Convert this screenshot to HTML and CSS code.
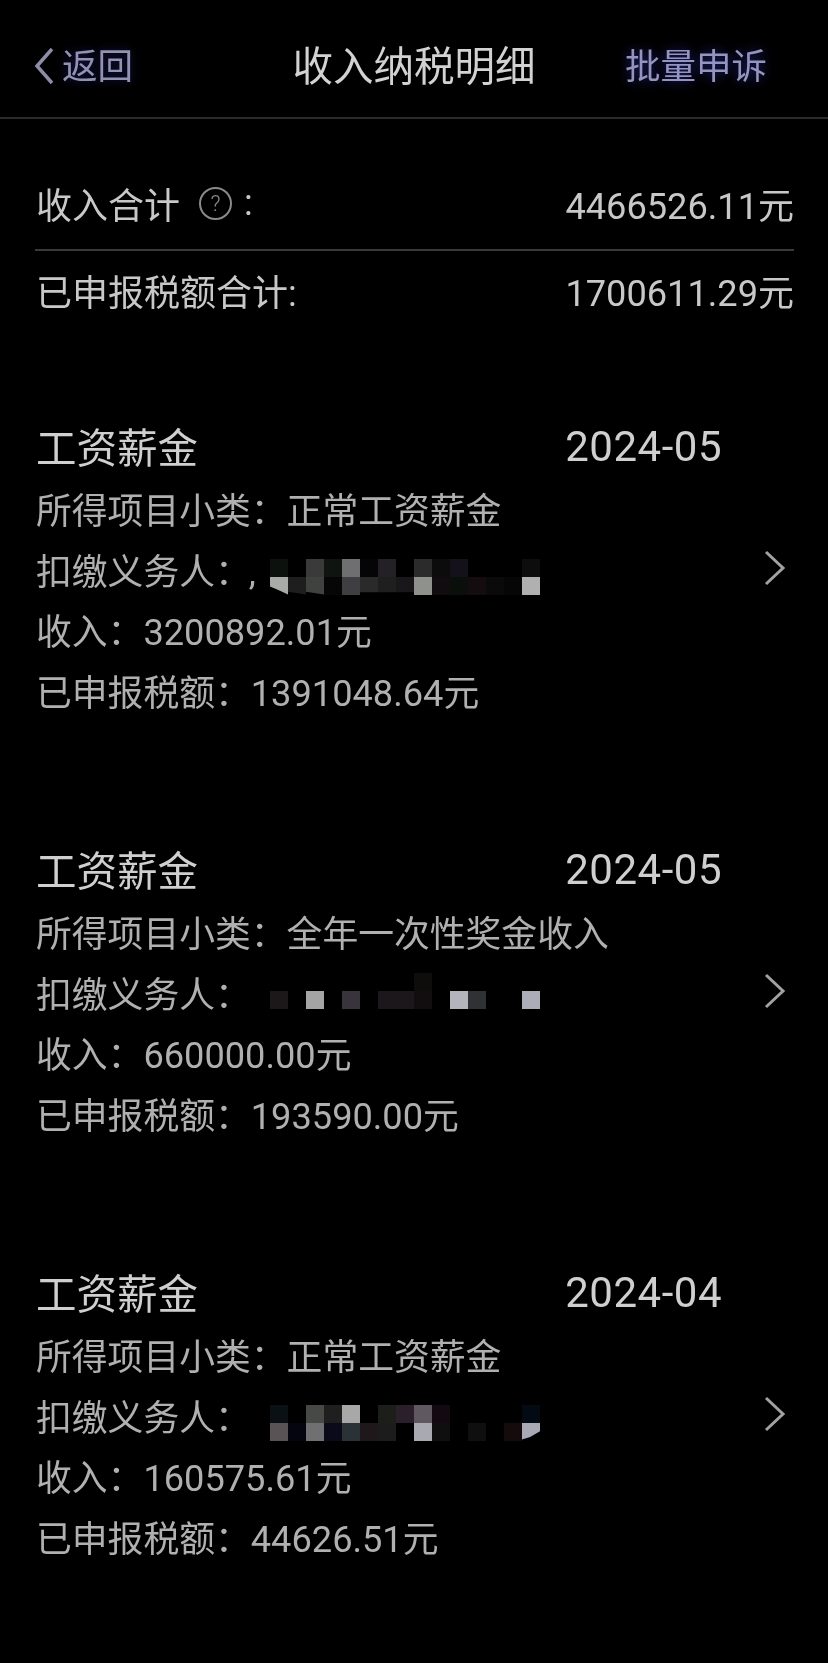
FILE: index.html
```html
<!DOCTYPE html>
<html lang="zh-CN">
<head>
<meta charset="utf-8">
<title>收入纳税明细</title>
<link rel="stylesheet" href="styles.css">
</head>
<body>
<div class="page">
  <header class="nav">
    <div class="back">
      <svg class="back-icon" viewBox="0 0 20 38"><path d="M18 2 3 19l15 17"/></svg>
      <span>返回</span>
    </div>
    <h1 class="nav-title">收入纳税明细</h1>
    <div class="appeal">批量申诉</div>
  </header>

  <section class="summary">
    <div class="sum-row sum-first">
      <div class="sum-label">收入合计<span class="help">?</span><span class="help-colon">:</span></div>
      <div><span class="num">4466526.11</span>元</div>
    </div>
    <div class="sum-row sum-second">
      <div>已申报税额合计:</div>
      <div><span class="num">1700611.29</span>元</div>
    </div>
  </section>

  <section class="item">
    <div class="item-head"><span>工资薪金</span><span class="item-date">2024-05</span></div>
    <div class="line">所得项目小类：正常工资薪金</div>
    <div class="line line-payer">
      <span>扣缴义务人：<span class="comma">,</span></span>
      <svg class="chev" viewBox="0 0 22 36"><path d="M2 2l17 16L2 34"/></svg>
      <div class="mosaic mosaic-a">
        <i style="background:#0d110d"></i><i></i><i style="background:#3a3a3a"></i><i style="background:#101410"></i><i style="background:#6f6e70"></i><i style="background:#050508"></i><i style="background:#232126"></i><i></i><i style="background:#2b2b2b"></i><i style="background:#0c0c0c"></i><i style="background:#15111a"></i><i></i><i></i><i></i><i style="background:#0d0d0d"></i>
        <i class="cut-l" style="background:#a8aca8"></i><i class="cut-m" style="background:#1e1e1e"></i><i class="cut-m" style="background:#3f423f"></i><i style="background:#060606"></i><i style="background:#3f3f42"></i><i class="cut-s" style="background:#2a2a2a"></i><i class="cut-s" style="background:#201f20"></i><i class="cut-s" style="background:#1a171b"></i><i style="background:#8f918d"></i><i style="background:#100c10"></i><i style="background:#0a0f0b"></i><i style="background:#140c0e"></i><i style="background:#0a0a0a"></i><i style="background:#060606"></i><i style="background:#b0b0b0"></i>
      </div>
    </div>
    <div class="line"><span>收入：<span class="num">3200892.01</span>元</span></div>
    <div class="line"><span>已申报税额：<span class="num">1391048.64</span>元</span></div>
  </section>

  <section class="item">
    <div class="item-head"><span>工资薪金</span><span class="item-date">2024-05</span></div>
    <div class="line">所得项目小类：全年一次性奖金收入</div>
    <div class="line line-payer">
      <span>扣缴义务人：</span>
      <svg class="chev" viewBox="0 0 22 36"><path d="M2 2l17 16L2 34"/></svg>
      <div class="mosaic mosaic-b">
        <i></i><i></i><i></i><i></i><i></i><i></i><i></i><i></i><i style="background:#0e0d0c"></i><i></i><i></i><i></i><i></i><i></i><i></i>
        <i style="background:#1c1719"></i><i></i><i style="background:#a5a5a5"></i><i></i><i style="background:#38343b"></i><i></i><i style="background:#1c171a"></i><i style="background:#1c171a"></i><i style="background:#120e10"></i><i></i><i style="background:#b4b4bc"></i><i style="background:#2e3234"></i><i></i><i></i><i style="background:#adadb8"></i>
      </div>
    </div>
    <div class="line"><span>收入：<span class="num">660000.00</span>元</span></div>
    <div class="line"><span>已申报税额：<span class="num">193590.00</span>元</span></div>
  </section>

  <section class="item">
    <div class="item-head"><span>工资薪金</span><span class="item-date">2024-04</span></div>
    <div class="line">所得项目小类：正常工资薪金</div>
    <div class="line line-payer">
      <span>扣缴义务人：</span>
      <svg class="chev" viewBox="0 0 22 36"><path d="M2 2l17 16L2 34"/></svg>
      <div class="mosaic mosaic-c">
        <i style="background:#0a1014"></i><i></i><i style="background:#474944"></i><i style="background:#1f1f1f"></i><i style="background:#a8a8a8"></i><i></i><i style="background:#1c1e1a"></i><i style="background:#2a1f2a"></i><i style="background:#5f5860"></i><i style="background:#120a10"></i><i></i><i></i><i></i><i></i><i style="background:#040a14"></i>
        <i style="background:#5a5356"></i><i style="background:#05050f"></i><i style="background:#707072"></i><i style="background:#0a0a1a"></i><i style="background:#2a3238"></i><i style="background:#1e181a"></i><i style="background:#1c1c1c"></i><i></i><i style="background:#a9a9b2"></i><i style="background:#0f0f0f"></i><i></i><i style="background:#0f0f0f"></i><i></i><i style="background:#150a0c"></i><i class="cut-r" style="background:#a9a9b5"></i>
      </div>
    </div>
    <div class="line"><span>收入：<span class="num">160575.61</span>元</span></div>
    <div class="line"><span>已申报税额：<span class="num">44626.51</span>元</span></div>
  </section>
</div>
</body>
</html>
```

FILE: styles.css
```css
* { box-sizing: border-box; margin: 0; padding: 0; }
html, body { background: #000; }
body {
  width: 828px;
  height: 1663px;
  overflow: hidden;
  font-family: Roboto, "Noto Sans CJK SC", sans-serif;
  font-weight: 400;
  color: #bdbdbd;
}
.page { width: 828px; height: 1663px; filter: blur(0.5px); }
.num { font-size: 36.2px; line-height: 1; }

.nav {
  height: 119px;
  padding: 9px 34px 0;
  display: grid;
  grid-template-columns: 1fr auto 1fr;
  align-items: center;
  border-bottom: 2px solid #2b2b2d;
}
.back {
  display: flex;
  align-items: center;
  gap: 8px;
  font-size: 35.5px;
  color: #9292b2;
  text-shadow: 0 0 10px #1a1a5a;
}
.back-icon { width: 20px; height: 38px; margin-top: 5px; fill: none; stroke: #8d8da8; stroke-width: 3.5; }
.nav-title { font-size: 40.5px; font-weight: 400; color: #d2d2d2; white-space: nowrap; }
.appeal {
  justify-self: end;
  margin-right: 27px;
  font-size: 35.5px;
  color: #9494c0;
  text-shadow: 0 0 12px #24247a;
}

.summary { margin: 0 34px 0 35px; font-size: 36px; color: #c8c8c8; }
.sum-row { display: flex; justify-content: space-between; align-items: center; padding-left: 1px; }
.sum-first { height: 74px; margin-top: 58px; padding-bottom: 20px; border-bottom: 2px solid #3a3a3c; }
.sum-second { height: 78px; }
.sum-label { display: flex; align-items: center; }
.help {
  width: 33px;
  height: 33px;
  margin-left: 19px;
  border: 2px solid #8a8a8a;
  border-radius: 50%;
  font-size: 22px;
  line-height: 29px;
  text-align: center;
  color: #8a8a8a;
  font-weight: 300;
}
.help-colon { margin-left: 12px; }

.item { margin: 0 37px 115px 36px; font-size: 35.8px; color: #b0b0b0; }
.summary + .item { margin-top: 84px; }
.item-head {
  height: 64px;
  margin-bottom: 2px;
  padding-right: 69px;
  display: flex;
  justify-content: space-between;
  align-items: center;
  font-size: 40.5px;
  color: #cfcfcf;
}
.item-date { font-size: 42px; letter-spacing: 0.5px; padding-top: 3px; }
.line { height: 60.5px; display: flex; align-items: center; white-space: pre; padding-bottom: 2px; }
.line-payer { position: relative; justify-content: space-between; }
.comma { margin-left: -2px; }
.chev { width: 22px; height: 36px; margin-right: 5px; margin-top: -2px; fill: none; stroke: #a2a2a2; stroke-width: 3; }

.mosaic {
  position: absolute;
  left: 234px;
  display: grid;
  grid-template-columns: repeat(15, 18px);
  grid-auto-rows: 18px;
}
.mosaic-a { top: 19px; }
.mosaic-b { top: 10px; }
.mosaic-c { top: 19px; }
.cut-l { clip-path: polygon(0 0, 100% 0, 100% 100%, 40% 72%, 0 55%); }
.cut-m { clip-path: polygon(0 0, 100% 0, 100% 100%, 0 85%); }
.cut-s { clip-path: polygon(0 0, 100% 0, 100% 88%, 0 88%); }
.cut-r { clip-path: polygon(0 0, 100% 0, 100% 48%, 45% 80%, 0 95%); }
```
